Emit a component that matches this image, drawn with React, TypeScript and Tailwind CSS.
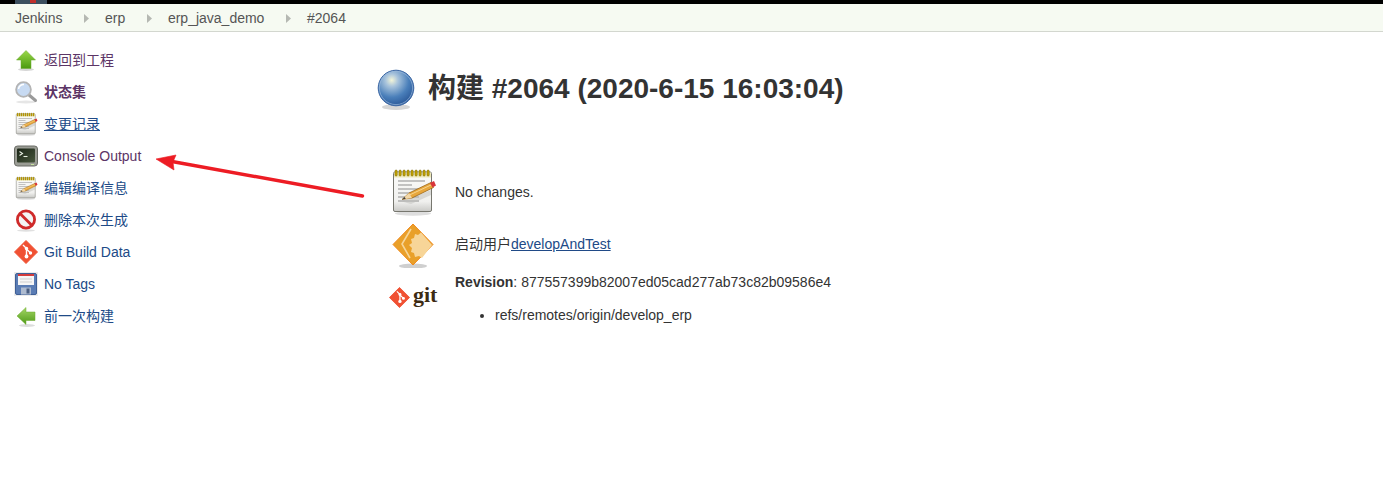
import type { ReactNode } from 'react'

const font = "font-['Liberation_Sans','Noto_Sans_CJK_SC',sans-serif]"

const NoteIcon = ({ size }: { size: number }) => (
  <svg width={size} height={size} viewBox="0 0 48 48">
    <defs>
      <linearGradient id="page" x1="0" y1="0" x2="0" y2="1">
        <stop offset="0" stopColor="#fbfbf9" />
        <stop offset="0.75" stopColor="#f0f0ee" />
        <stop offset="1" stopColor="#c9c9c6" />
      </linearGradient>
    </defs>
    <ellipse cx="24" cy="45.5" rx="18" ry="2.2" fill="#dedede" />
    <rect x="4.5" y="4" width="38" height="39.5" rx="1.5" fill="url(#page)" stroke="#77776f" />
    <rect x="5" y="4.5" width="37" height="5" fill="#efe9b8" />
    {[7, 11, 15, 19, 23, 27, 31, 35, 39].map((x) => (
      <rect key={x} x={x - 1} y="2" width="2.2" height="6" rx="1" fill="#c9a800" stroke="#6d5b00" strokeWidth="0.5" />
    ))}
    {[13, 17, 21, 25, 29, 33].map((y) => (
      <path key={y} d={`M9 ${y}H${y === 17 ? 23 : y > 21 ? 30 : 36}`} stroke="#8d8d8d" strokeWidth="1" />
    ))}
    <path d="M13 33.5 L42 22 L42 27 L22 36Z" fill="#bdbdb9" opacity="0.5" />
    <path d="M13 31.5 L20 25 L42 14.5 L44.5 19.5 L23 30Z" fill="#e8a73c" stroke="#8f5a0c" strokeWidth="0.7" />
    <path d="M20.5 27 L43 16.5" stroke="#f6d58e" strokeWidth="1" />
    <path d="M41 15 L45 13 L47 17.5 L43.5 19.5Z" fill="#d8353a" />
    <path d="M13 31.5 L20 25 L23 30Z" fill="#f2d7a8" />
    <path d="M13 31.5 L15.6 29 L16.8 30.8Z" fill="#3a3a3a" />
  </svg>
)

const UpArrow = () => (
  <svg width="24" height="24" viewBox="0 0 24 24">
    <defs>
      <linearGradient id="upg" x1="0" y1="0" x2="0" y2="1">
        <stop offset="0" stopColor="#9ad84a" />
        <stop offset="1" stopColor="#4a9a0e" />
      </linearGradient>
    </defs>
    <ellipse cx="12" cy="21.5" rx="8" ry="1.5" fill="#d6d6d6" />
    <path d="M12 2.5 L21.5 12 H17 V20.5 H7 V12 H2.5Z" fill="url(#upg)" stroke="#6aa82c" strokeWidth="0.5" />
  </svg>
)

const LeftArrow = () => (
  <svg width="24" height="24" viewBox="0 0 24 24">
    <defs>
      <linearGradient id="leftg" x1="0" y1="0" x2="0" y2="1">
        <stop offset="0" stopColor="#a4d765" />
        <stop offset="1" stopColor="#4f9a18" />
      </linearGradient>
    </defs>
    <ellipse cx="13" cy="21.5" rx="8" ry="1.5" fill="#dcdcdc" />
    <path d="M3 12 L12 3.5 V8 H21 V16.5 H12 V20.5Z" fill="url(#leftg)" stroke="#6aa82c" strokeWidth="0.5" />
  </svg>
)

const SearchIcon = () => (
  <svg width="24" height="24" viewBox="0 0 24 24">
    <ellipse cx="12" cy="22" rx="10" ry="1.5" fill="#e6e6e6" />
    <path d="M15 15 L21.5 20.5" stroke="#9a9a9a" strokeWidth="3" strokeLinecap="round" />
    <circle cx="9.5" cy="9.5" r="7.4" fill="#c7daf2" stroke="#b4b4b4" strokeWidth="1.8" />
    <path d="M4.5 9 A5 5 0 0 1 10 4.5" stroke="#fff" strokeWidth="1.5" fill="none" />
  </svg>
)

const TerminalIcon = () => (
  <svg width="24" height="24" viewBox="0 0 24 24">
    <defs>
      <linearGradient id="screen" x1="0" y1="0" x2="1" y2="1">
        <stop offset="0" stopColor="#1a2416" />
        <stop offset="1" stopColor="#47563c" />
      </linearGradient>
    </defs>
    <rect x="0.5" y="2" width="23" height="20" rx="3" fill="#9a9c94" stroke="#6a6c66" />
    <rect x="3" y="4.5" width="18" height="14" rx="1" fill="url(#screen)" />
    <path d="M5.5 7.5 L8.5 9.5 L5.5 11.5" stroke="#e8efe2" strokeWidth="1.1" fill="none" />
    <path d="M9.5 12.5 H13.5" stroke="#e8efe2" strokeWidth="1.1" />
    <rect x="17" y="20" width="3" height="1" fill="#c7e29b" />
  </svg>
)

const NoEntryIcon = () => (
  <svg width="24" height="24" viewBox="0 0 24 24">
    <ellipse cx="12" cy="22.5" rx="9" ry="1.2" fill="#e0e0e0" />
    <circle cx="12" cy="11.5" r="8.6" fill="#f4f4f4" stroke="#cf2a2a" strokeWidth="2.8" />
    <path d="M6 5.5 L18 17.5" stroke="#cf2a2a" strokeWidth="2.8" />
  </svg>
)

const GitDiamond = ({ size }: { size: number }) => (
  <svg width={size} height={size} viewBox="0 0 24 24">
    <path d="M12 0.5 L23.5 12 L12 23.5 L0.5 12Z" fill="#f05133" stroke="#f05133" strokeLinejoin="round" />
    <path d="M9 5 L12.5 8.5 V16 M12.5 9 L16.5 13" stroke="#fff" strokeWidth="1.4" fill="none" />
    <circle cx="12.5" cy="8.5" r="1.7" fill="#fff" />
    <circle cx="12.5" cy="16.5" r="1.9" fill="#fff" />
    <circle cx="16.5" cy="13" r="1.7" fill="#fff" />
  </svg>
)

const SaveIcon = () => (
  <svg width="24" height="24" viewBox="0 0 24 24">
    <rect width="24" height="24" fill="#ececec" />
    <rect x="1.5" y="1.5" width="21" height="21" rx="1.5" fill="#5a7cb4" stroke="#3f5f96" />
    <rect x="4" y="2" width="16" height="11" fill="#f6f6f6" />
    <rect x="4" y="2" width="16" height="2" fill="#d43c3c" />
    <path d="M6 7H18M6 10H18" stroke="#cfcfcf" />
    <rect x="7" y="15.5" width="10" height="7" fill="#aebbd0" />
    <rect x="12.5" y="16.5" width="3" height="5" fill="#4a5f82" />
  </svg>
)

const GlobeIcon = () => (
  <svg width="40" height="42" viewBox="0 0 40 42">
    <defs>
      <radialGradient id="ball" cx="0.38" cy="0.28" r="0.8">
        <stop offset="0" stopColor="#f3f5d8" />
        <stop offset="0.22" stopColor="#a9c4dc" />
        <stop offset="0.6" stopColor="#4a7fba" />
        <stop offset="1" stopColor="#234f90" />
      </radialGradient>
    </defs>
    <ellipse cx="19" cy="38" rx="14" ry="3" fill="#d6d6d6" />
    <circle cx="19" cy="19" r="17.8" fill="url(#ball)" stroke="#3c67a4" />
    <circle cx="19" cy="19" r="16.6" fill="none" stroke="#9ab8da" strokeWidth="0.7" />
  </svg>
)

const BuildIcon = () => (
  <svg width="48" height="48" viewBox="0 0 48 48">
    <ellipse cx="24" cy="46" rx="14" ry="2.6" fill="#cfcfcf" />
    <path d="M24 4 L44 24.5 L24 45 L4 24.5Z" fill="#e9a02a" stroke="#f08a1d" strokeWidth="1" strokeLinejoin="round" />
    <path
      d="M32 12.5 L29 15 L26 14 L25 18 L22 19 L23 23 L20 25 L23 28 L22 32 L25 33 L26 37 L30 36 L33 38 L43 25Z"
      fill="#f7d598"
    />
    <path d="M22 9 L13 24 L21 38" stroke="#f7d598" strokeWidth="1.6" fill="none" />
  </svg>
)

const Triangle = () => (
  <svg width="5" height="9" viewBox="0 0 5 9" className="ml-[22px] mr-[15.6px]">
    <path d="M0 0 L5 4.5 L0 9Z" fill="#b5b8b2" />
  </svg>
)

const tasks: { icon: ReactNode; label: string; color: string; bold?: boolean; underline?: boolean }[] = [
  { icon: <UpArrow />, label: '返回到工程', color: 'text-[#5c3566]' },
  { icon: <SearchIcon />, label: '状态集', color: 'text-[#5c3566]', bold: true },
  { icon: <NoteIcon size={24} />, label: '变更记录', color: 'text-[#204a87]', underline: true },
  { icon: <TerminalIcon />, label: 'Console Output', color: 'text-[#5c3566]' },
  { icon: <NoteIcon size={24} />, label: '编辑编译信息', color: 'text-[#204a87]' },
  { icon: <NoEntryIcon />, label: '删除本次生成', color: 'text-[#204a87]' },
  { icon: <GitDiamond size={24} />, label: 'Git Build Data', color: 'text-[#204a87]' },
  { icon: <SaveIcon />, label: 'No Tags', color: 'text-[#204a87]' },
  { icon: <LeftArrow />, label: '前一次构建', color: 'text-[#204a87]' },
]

const crumbs = ['Jenkins', 'erp', 'erp_java_demo', '#2064']

export default function App() {
  return (
    <div className={`relative min-h-[496px] bg-white text-[14px] text-[#333] ${font}`}>
      <div className="relative h-[4px] bg-black">
        <div className="absolute left-[15px] top-0 h-[4px] w-[32px] bg-[#3c4f5f]">
          <div className="ml-[15px] h-[3px] w-[6px] bg-[#c0302c]" />
        </div>
      </div>

      <div className="flex h-[28px] items-center border-b border-[#d3d7cf] bg-[#f6faf2] pl-[15px] pt-[1px] text-[#555]">
        {crumbs.map((c, i) => (
          <div key={c} className="flex items-center">
            <span>{c}</span>
            {i < crumbs.length - 1 ? <Triangle /> : null}
          </div>
        ))}
      </div>

      <div className="flex pt-[12px]">
        <div className="w-[377px] shrink-0 pl-[14px]">
          {tasks.map((t) => (
            <div key={t.label} className="flex h-[32px] items-center gap-[6px]">
              <div className="h-[24px] w-[24px]">{t.icon}</div>
              <span className={`${t.color} ${t.bold ? 'font-bold' : ''} ${t.underline ? 'underline' : ''}`}>
                {t.label}
              </span>
            </div>
          ))}
        </div>

        <div className="flex-1">
          <div className="mt-[25px] flex items-center gap-[11px]">
            <GlobeIcon />
            <h1 className="-mt-[2px] text-[28px] font-bold leading-[40px] text-[#333]">
              构建 #2064 (2020-6-15 16:03:04)
            </h1>
          </div>

          <div className="mt-[57px] flex flex-col">
            <div className="flex h-[48px] items-center">
              <div className="ml-[12px] w-[66px]">
                <NoteIcon size={48} />
              </div>
              <span>No changes.</span>
            </div>
            <div className="mt-[4px] flex h-[48px] items-center">
              <div className="ml-[12px] w-[66px]">
                <BuildIcon />
              </div>
              <span>
                启动用户
                <span className="text-[#204a87] underline">developAndTest</span>
              </span>
            </div>
            <div className="mt-[4px] flex">
              <div className="ml-[12px] flex w-[66px] items-start pt-[15px]">
                <GitDiamond size={21} />
                <span className="-mt-[6px] ml-[3px] font-['Liberation_Serif',serif] text-[22px] font-bold leading-[28px] text-[#3d2b13]">
                  git
                </span>
              </div>
              <div>
                <div className="leading-[20px]">
                  <b>Revision</b>: 877557399b82007ed05cad277ab73c82b09586e4
                </div>
                <ul className="mt-[13px] list-disc pl-[40px] leading-[20px]">
                  <li>refs/remotes/origin/develop_erp</li>
                </ul>
              </div>
            </div>
          </div>
        </div>
      </div>

      <svg className="absolute left-[150px] top-[145px]" width="220" height="60" viewBox="0 0 220 60">
        <path d="M22 16.5 L212.5 51" stroke="#ed1c24" strokeWidth="3.4" strokeLinecap="round" />
        <path d="M6 14 L26 10 L23 17 L24 25Z" fill="#ed1c24" stroke="#ed1c24" strokeWidth="0.6" strokeLinejoin="round" />
      </svg>
    </div>
  )
}
